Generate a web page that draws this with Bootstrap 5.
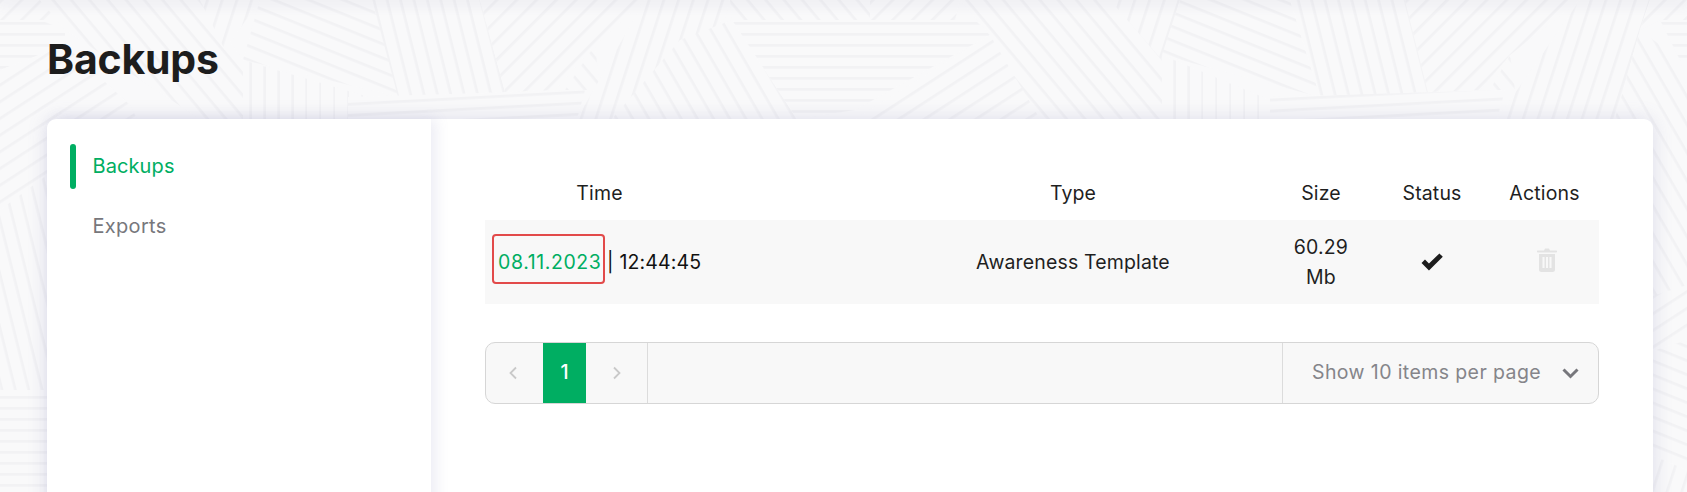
<!DOCTYPE html>
<html lang="en">
<head>
<meta charset="utf-8">
<title>Backups</title>
<link href="https://cdn.jsdelivr.net/npm/bootstrap@5.3.0/dist/css/bootstrap.min.css" rel="stylesheet">
<style>
html,body{height:492px;overflow:hidden}
body{background:#f9f9fa;font-family:Inter,"Liberation Sans",sans-serif;color:#1f1f1f;font-size:19.5px;letter-spacing:.15px;position:relative}
.bg-art{position:absolute;left:0;top:0;width:1687px;height:492px;z-index:0;filter:blur(.5px)}
.top-shade{position:absolute;left:0;right:0;top:0;height:0;box-shadow:0 0 14px 3px rgba(90,90,140,.14);z-index:1}
.page-wrap{position:relative;z-index:2;padding:0 34px 0 47px}
.page-title{font-size:41px;font-weight:700;line-height:46px;letter-spacing:-.2px;margin:0;padding:36px 0 37px;color:#1d1d1d}
.panel{background:#fff;border-radius:9px 9px 0 0;box-shadow:0 0 20px rgba(110,110,170,.2);min-height:420px}
.side{width:384px;flex:none;padding:17px 0 0;box-shadow:5px 0 14px rgba(110,110,170,.13);position:relative;border-radius:9px 0 0 0}
.side .nav-link{position:relative;height:60px;padding:0 0 0 45.5px;line-height:60px;color:#77777c;font-size:20px;letter-spacing:.3px}
.side .nav-link.active{color:#00ae62;letter-spacing:.1px}
.side .nav-link.active::before{content:"";position:absolute;left:23px;top:8px;width:6px;height:45px;border-radius:3px;background:#00ae62}
.main-area{flex:1;padding:48px 54px 0;min-width:0}
.bk-table{margin:0;table-layout:fixed;width:1114px;--bs-table-bg:transparent;--bs-table-border-color:transparent}
.bk-table th,.bk-table td{border-width:0}
.bk-table th{font-weight:400;text-align:center;padding:11px 0 12px;line-height:30px;color:#1f1f1f}
.bk-table td{background:#f8f8f8;text-align:center;vertical-align:middle;padding:12px 0;line-height:30px;color:#1f1f1f;height:84px}
.bk-table .col-type{padding-left:164px}
.bk-table td.cell-time{text-align:left;padding-left:13px;color:#111}
.date-mark{position:relative;color:#00ae62;text-decoration:none;letter-spacing:.6px}
.date-mark::after{content:"";position:absolute;left:-6px;right:-4px;top:-16px;bottom:-10px;border:2.5px solid #e24a4a;border-radius:4px}
.check-icon{margin-bottom:4px}
.bin-icon{margin-left:4px;margin-bottom:6px}
.pager{margin-top:38px;height:62px;background:#f8f8f8;border:1px solid #d6d6d6;border-radius:10px;overflow:hidden}
.pg-cell{display:flex;align-items:center;justify-content:center;height:100%}
.pg-prev{width:57px;padding-right:3px}
.pg-now{width:43px;background:#00ae62;color:#fff;font-weight:500}
.pg-next{width:62px;border-right:1px solid #dcdcdc}
.pg-fill{flex:1}
.pg-size{width:316px;border-left:1px solid #dcdcdc;color:#85858a;justify-content:flex-start;padding:0 19px 0 29px;letter-spacing:.4px}
.pg-size svg{margin-left:auto}
</style>
</head>
<body>
<svg class="bg-art" viewBox="0 0 1687 492" aria-hidden="true">
<defs>
<pattern id="a0" width="11" height="11" patternUnits="userSpaceOnUse"><rect width="11" height="11" fill="#f9f9fa"/><rect width="11" height="2.6" fill="#f2f2f4"/></pattern>
<pattern id="a-3" width="11" height="11" patternUnits="userSpaceOnUse" patternTransform="rotate(-3)"><rect width="11" height="11" fill="#f9f9fa"/><rect width="11" height="2.6" fill="#f2f2f4"/></pattern>
<pattern id="a22" width="13" height="13" patternUnits="userSpaceOnUse" patternTransform="rotate(22)"><rect width="13" height="13" fill="#f9f9fa"/><rect width="13" height="2.6" fill="#f2f2f4"/></pattern>
<pattern id="a50" width="14" height="14" patternUnits="userSpaceOnUse" patternTransform="rotate(50)"><rect width="14" height="14" fill="#f9f9fa"/><rect width="14" height="2.6" fill="#f2f2f4"/></pattern>
<pattern id="a60" width="14" height="14" patternUnits="userSpaceOnUse" patternTransform="rotate(60)"><rect width="14" height="14" fill="#f9f9fa"/><rect width="14" height="2.6" fill="#f2f2f4"/></pattern>
<pattern id="a76" width="13" height="13" patternUnits="userSpaceOnUse" patternTransform="rotate(76)"><rect width="13" height="13" fill="#f9f9fa"/><rect width="13" height="2.6" fill="#f2f2f4"/></pattern>
<pattern id="a90" width="14" height="14" patternUnits="userSpaceOnUse" patternTransform="rotate(90)"><rect width="14" height="14" fill="#f9f9fa"/><rect width="14" height="2.6" fill="#f2f2f4"/></pattern>
<pattern id="a-33" width="14" height="14" patternUnits="userSpaceOnUse" patternTransform="rotate(-33)"><rect width="14" height="14" fill="#f9f9fa"/><rect width="14" height="2.6" fill="#f2f2f4"/></pattern>
<pattern id="a-45" width="14" height="14" patternUnits="userSpaceOnUse" patternTransform="rotate(-45)"><rect width="14" height="14" fill="#f9f9fa"/><rect width="14" height="2.6" fill="#f2f2f4"/></pattern>
<pattern id="a-72" width="14" height="14" patternUnits="userSpaceOnUse" patternTransform="rotate(-72)"><rect width="14" height="14" fill="#f9f9fa"/><rect width="14" height="2.6" fill="#f2f2f4"/></pattern>
</defs>
<g>
<polygon points="0,0 40,0 65,20 0,20" fill="url(#a-45)"/>
<polygon points="0,20 40,20 65,30 65,45 0,70" fill="url(#a0)"/>
<polygon points="40,0 200,0 243,60 243,119 200,119 65,30" fill="url(#a50)"/>
<polygon points="0,70 65,45 130,105 140,125 0,210" fill="url(#a-33)"/>
<polygon points="243,60 372,98 348,119 243,119" fill="url(#a90)"/>
<polygon points="200,0 260,0 225,50" fill="url(#a-72)"/>
<polygon points="260,0 372,0 400,97 243,60" fill="url(#a22)"/>
<polygon points="372,0 480,0 505,92 398,97" fill="url(#a76)"/>
<polygon points="480,0 645,0 595,45 555,90 505,92" fill="url(#a-45)"/>
<polygon points="565,90 595,45 600,90" fill="url(#a50)"/>
<polygon points="348,97 585,90 577,119 348,119" fill="url(#a-3)"/>
<polygon points="645,0 730,0 725,18 612,119 577,119" fill="url(#a-72)"/>
<polygon points="732,20 797,119 612,119 680,40" fill="url(#a60)"/>
<polygon points="730,0 880,0 870,20 732,20" fill="url(#a50)"/>
<polygon points="870,0 960,0 955,20 870,20" fill="url(#a-45)"/>
<polygon points="732,20 975,20 990,35 855,110 797,119" fill="url(#a0)"/>
<polygon points="990,35 1030,80 1040,119 855,119" fill="url(#a-33)"/>
<polygon points="960,0 1180,0 1162,60 1162,119 1040,119 990,35" fill="url(#a50)"/>
<polygon points="1110,0 1180,0 1162,60" fill="url(#a-72)"/>
<polygon points="1180,0 1290,0 1320,97 1162,55" fill="url(#a22)"/>
<polygon points="1162,55 1270,100 1270,119 1162,119" fill="url(#a90)"/>
<polygon points="1290,0 1405,0 1428,92 1320,97" fill="url(#a76)"/>
<polygon points="1405,0 1580,0 1510,55 1480,90 1428,92" fill="url(#a-45)"/>
<polygon points="1490,90 1510,55 1515,90" fill="url(#a50)"/>
<polygon points="1270,97 1505,90 1497,119 1270,119" fill="url(#a-3)"/>
<polygon points="1580,0 1650,0 1640,30 1615,119 1497,119" fill="url(#a-72)"/>
<polygon points="1650,0 1687,0 1687,20 1660,20 1640,30" fill="url(#a-45)"/>
<polygon points="1660,20 1687,20 1687,60 1680,60" fill="url(#a0)"/>
<polygon points="1640,30 1680,60 1687,90 1687,300 1653,300 1615,119" fill="url(#a60)"/>
<polygon points="1640,300 1687,285 1687,340 1640,355" fill="url(#a-33)"/>
<polygon points="1640,355 1687,340 1687,470 1640,450" fill="url(#a22)"/>
<polygon points="1640,450 1687,470 1687,492 1640,492" fill="url(#a-72)"/>
<polygon points="0,210 47,175 47,390 0,390" fill="url(#a76)"/>
<polygon points="0,390 47,390 47,492 0,492" fill="url(#a0)"/>
</g>
</svg>
<div class="top-shade"></div>
<div class="page-wrap">
  <h1 class="page-title">Backups</h1>
  <div class="panel d-flex">
    <nav class="side nav flex-column">
      <a class="nav-link active" href="#">Backups</a>
      <a class="nav-link" href="#">Exports</a>
    </nav>
    <div class="main-area">
      <table class="table bk-table">
        <colgroup><col style="width:229px"><col style="width:554px"><col style="width:106px"><col style="width:116px"><col style="width:109px"></colgroup>
        <thead>
          <tr><th>Time</th><th class="col-type">Type</th><th>Size</th><th>Status</th><th>Actions</th></tr>
        </thead>
        <tbody>
          <tr>
            <td class="cell-time"><a class="date-mark" href="#">08.11.2023</a> | 12:44:45</td>
            <td class="col-type">Awareness Template</td>
            <td>60.29<br>Mb</td>
            <td><svg class="check-icon" width="22" height="18" viewBox="0 0 21 17"><path d="M0.5 9.5 3.8 6.2 7.6 10 17.6 0.3 20.8 3.6 7.6 16.6Z" fill="#1d1d1d"/></svg></td>
            <td><svg class="bin-icon" width="20" height="24" viewBox="0 0 20 24"><path d="M7 2.4 8 .6h4l1 1.8h6.2a.8.8 0 0 1 0 2H.8a.8.8 0 0 1 0-2Z" fill="#e3e3e3"/><path fill-rule="evenodd" d="M2 6h16v15.5a2.5 2.5 0 0 1-2.500 2.500h-11A2.500 2.500 0 0 1 2 21.500ZM5.500 9v11h2V9ZM9 9v11h2V9ZM12.500 9v11h2V9Z" fill="#e3e3e3"/></svg></td>
          </tr>
        </tbody>
      </table>
      <div class="pager d-flex align-items-stretch">
        <div class="pg-cell pg-prev"><svg width="10" height="14" viewBox="0 0 10 14"><path d="M8 1.500 2.500 7 8 12.500" fill="none" stroke="#c9c9c9" stroke-width="1.800"/></svg></div>
        <div class="pg-cell pg-now">1</div>
        <div class="pg-cell pg-next"><svg width="10" height="14" viewBox="0 0 10 14"><path d="M2 1.500 7.500 7 2 12.500" fill="none" stroke="#c9c9c9" stroke-width="1.800"/></svg></div>
        <div class="pg-fill"></div>
        <div class="pg-cell pg-size"><span>Show 10 items per page</span><svg width="17" height="11" viewBox="0 0 17 11"><path d="M1.500 1.500 8.500 8.500 15.500 1.500" fill="none" stroke="#77777c" stroke-width="3"/></svg></div>
      </div>
    </div>
  </div>
</div>
<script src="https://cdn.jsdelivr.net/npm/bootstrap@5.3.0/dist/js/bootstrap.bundle.min.js"></script>
</body>
</html>
